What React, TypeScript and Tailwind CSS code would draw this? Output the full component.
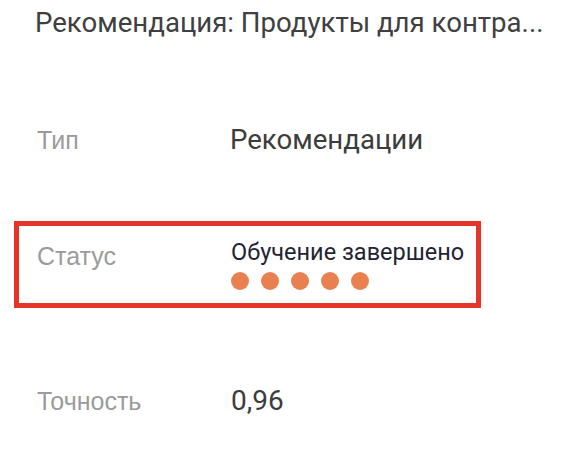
export default function App() {
  return (
    <div
      className="w-[574px] h-[460px] bg-white overflow-hidden"
      style={{ fontFamily: "Roboto, 'Liberation Sans', sans-serif" }}
    >
      {/* HEADER */}
      <div className="pt-[7px] pl-[35px]">
        <h1 className="text-[27.6px] leading-[32px] text-[#404040] whitespace-nowrap">
          Рекомендация: Продукты для контра...
        </h1>
      </div>

      {/* ТИП */}
      <div className="mt-[85px] pl-[37px] flex items-center h-[32px]">
        <div className="w-[193px] font-['Liberation_Sans',sans-serif] text-[25px] leading-[32px] text-[#9b9b9b]">
          Тип
        </div>
        <div className="text-[27.6px] leading-[32px] text-[#3c3c3c]">Рекомендации</div>
      </div>

      {/* СТАТУС */}
      <div className="mt-[65px] ml-[14px] w-[467px] h-[87px] border-[5px] border-[#e5352a] flex items-start pt-[12px] pl-[18px]">
        <div className="w-[194px] pt-[4px] font-['Liberation_Sans',sans-serif] text-[25px] leading-[28px] text-[#9b9b9b]">
          Статус
        </div>
        <div className="flex flex-col">
          <div className="text-[23.5px] leading-[28px] text-[#1f2433]">Обучение завершено</div>
          <div className="mt-[6px] flex gap-[12px]">
            {[0, 1, 2, 3, 4].map((i) => (
              <span key={i} className="w-[18px] h-[18px] rounded-full bg-[#e9804f]" />
            ))}
          </div>
        </div>
      </div>

      {/* ТОЧНОСТЬ */}
      <div className="mt-[77px] pl-[37px] flex items-center h-[32px]">
        <div className="w-[194px] font-['Liberation_Sans',sans-serif] text-[25px] leading-[32px] text-[#9b9b9b]">
          Точность
        </div>
        <div className="text-[28px] leading-[32px] text-[#3c3c3c]">0,96</div>
      </div>
    </div>
  );
}
